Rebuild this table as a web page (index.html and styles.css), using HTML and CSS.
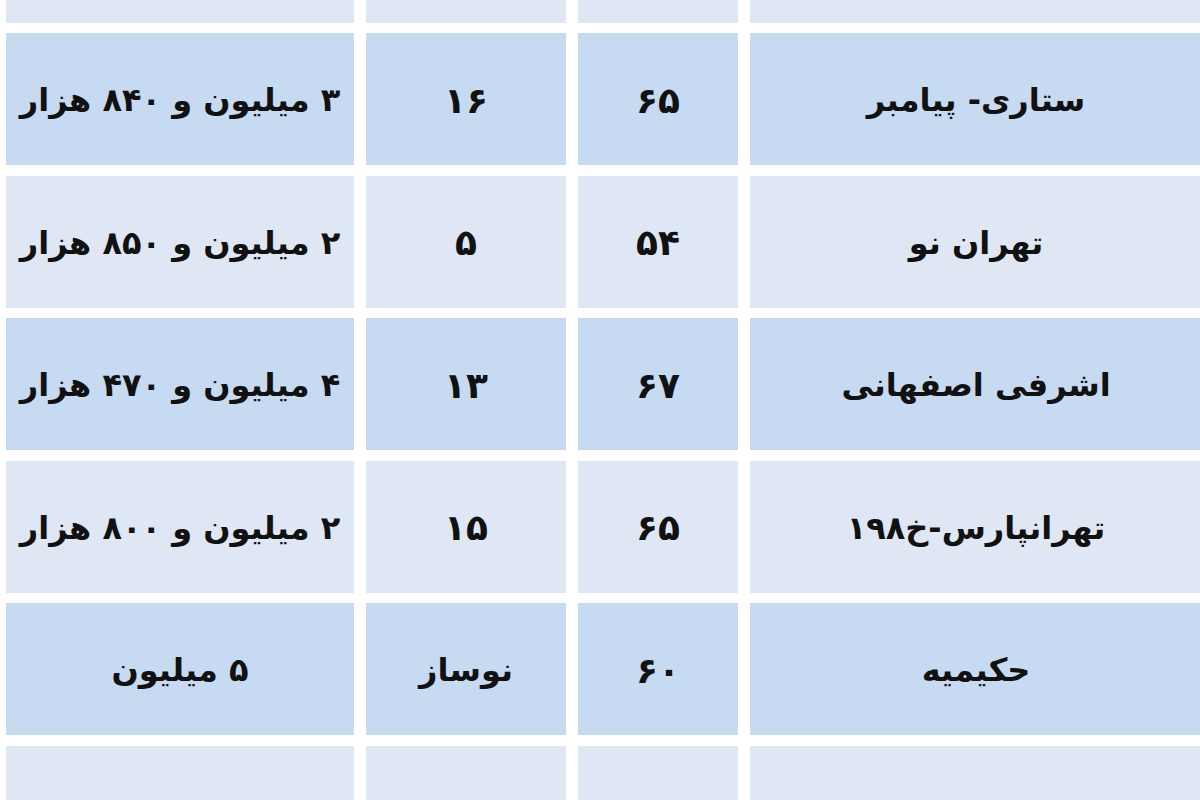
FILE: index.html
```html
<!DOCTYPE html>
<html lang="fa" dir="rtl">
<head>
<meta charset="utf-8">
<title>قیمت رهن و اجاره</title>
<link rel="stylesheet" href="styles.css">
</head>
<body>
<div class="page">
  <div class="table">
    <div class="cell light"></div><div class="cell light"></div><div class="cell light"></div><div class="cell light"></div>

    <div class="cell dark">ستاری- پیامبر</div><div class="cell dark num">۶۵</div><div class="cell dark num">۱۶</div><div class="cell dark">۳ میلیون و ۸۴۰ هزار</div>

    <div class="cell light">تهران نو</div><div class="cell light num">۵۴</div><div class="cell light num">۵</div><div class="cell light">۲ میلیون و ۸۵۰ هزار</div>

    <div class="cell dark">اشرفی اصفهانی</div><div class="cell dark num">۶۷</div><div class="cell dark num">۱۳</div><div class="cell dark">۴ میلیون و ۴۷۰ هزار</div>

    <div class="cell light">تهرانپارس-خ۱۹۸</div><div class="cell light num">۶۵</div><div class="cell light num">۱۵</div><div class="cell light">۲ میلیون و ۸۰۰ هزار</div>

    <div class="cell dark">حکیمیه</div><div class="cell dark num">۶۰</div><div class="cell dark">نوساز</div><div class="cell dark">۵ میلیون</div>

    <div class="cell light">ستارخان</div><div class="cell light num">۶۶</div><div class="cell light num">۱۷</div><div class="cell light">۳ میلیون و ۹۵۰ هزار</div>
  </div>
</div>
</body>
</html>
```
FILE: styles.css
```css
html, body {
  margin: 0;
  padding: 0;
  background: #ffffff;
}
.page {
  width: 1200px;
  height: 800px;
  overflow: hidden;
}
.table {
  direction: rtl;
  display: grid;
  grid-template-columns: 452px 160px 200px 348px;
  grid-auto-rows: 132px;
  column-gap: 12px;
  row-gap: 10.5px;
  margin: -109.5px -2px 0 6px;
}
.cell {
  display: flex;
  align-items: center;
  justify-content: center;
  font-family: "DejaVu Sans", sans-serif;
  font-weight: bold;
  font-size: 32px;
  color: #111111;
  white-space: nowrap;
  padding-top: 2px;
  box-sizing: border-box;
}
.num {
  font-size: 36px;
}
.dark {
  background: #c6daf1;
}
.light {
  background: #dfe7f5;
}
```
